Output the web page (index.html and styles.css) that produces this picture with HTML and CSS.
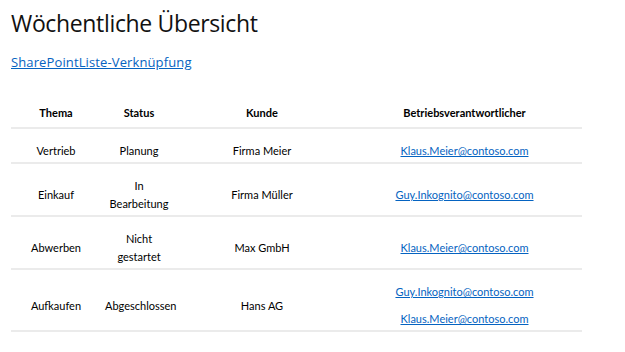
FILE: index.html
```html
<!DOCTYPE html>
<html lang="de">
<head>
<meta charset="utf-8">
<title>Wöchentliche Übersicht</title>
<link rel="stylesheet" href="styles.css">
</head>
<body>
<div class="page">
  <h1 class="title">Wöchentliche Übersicht</h1>
  <a class="list-link" href="#">SharePointListe-Verknüpfung</a>
  <table class="overview">
    <colgroup>
      <col class="c-thema">
      <col class="c-status">
      <col class="c-kunde">
      <col class="c-owner">
    </colgroup>
    <thead>
      <tr>
        <th>Thema</th>
        <th>Status</th>
        <th>Kunde</th>
        <th>Betriebsverantwortlicher</th>
      </tr>
    </thead>
    <tbody>
      <tr>
        <td>Vertrieb</td>
        <td><span class="status">Planung</span></td>
        <td>Firma Meier</td>
        <td><a class="mail" href="#">Klaus.Meier@contoso.com</a></td>
      </tr>
      <tr>
        <td>Einkauf</td>
        <td><span class="status">In Bearbeitung</span></td>
        <td>Firma Müller</td>
        <td><a class="mail" href="#">Guy.Inkognito@contoso.com</a></td>
      </tr>
      <tr>
        <td>Abwerben</td>
        <td><span class="status">Nicht gestartet</span></td>
        <td>Max GmbH</td>
        <td><a class="mail" href="#">Klaus.Meier@contoso.com</a></td>
      </tr>
      <tr>
        <td>Aufkaufen</td>
        <td><span class="status">Abgeschlossen</span></td>
        <td>Hans AG</td>
        <td>
          <div class="mail-list">
            <a class="mail" href="#">Guy.Inkognito@contoso.com</a>
            <a class="mail" href="#">Klaus.Meier@contoso.com</a>
          </div>
        </td>
      </tr>
    </tbody>
  </table>
</div>
</body>
</html>
```

FILE: styles.css
```css
html, body {
  margin: 0;
  padding: 0;
  background: #ffffff;
}

.page {
  padding: 0 11px;
  font-family: "Open Sans", "Noto Sans", sans-serif;
  color: #000000;
}

.title {
  margin: 7px 0 0;
  font-size: 23px;
  line-height: 32px;
  font-weight: 400;
  letter-spacing: -0.35px;
  color: #111111;
}

.list-link {
  display: block;
  width: max-content;
  margin-top: 14px;
  font-size: 13px;
  line-height: 18px;
  letter-spacing: 0.12px;
  color: #0563c1;
  text-decoration: underline;
}

.overview {
  margin-top: 20px;
  width: 571px;
  table-layout: fixed;
  border-collapse: collapse;
  font-family: "Lato", "Liberation Sans", sans-serif;
  font-size: 11px;
  line-height: 18px;
  color: #000000;
}

.c-thema { width: 90px; }
.c-status { width: 76px; }
.c-kunde { width: 170px; }
.c-owner { width: 235px; }

.overview th,
.overview td {
  text-align: center;
  vertical-align: middle;
  border-bottom: 2px solid #ebebeb;
}

.overview th {
  font-weight: 700;
  padding: 13px 4px 5px;
}

.overview td {
  padding: 13px 4px 2px;
}

.status {
  display: inline-block;
  width: min-content;
}

.mail {
  color: #0563c1;
  text-decoration: underline;
}

.mail-list {
  display: flex;
  flex-direction: column;
  align-items: center;
  gap: 9px;
}
```
